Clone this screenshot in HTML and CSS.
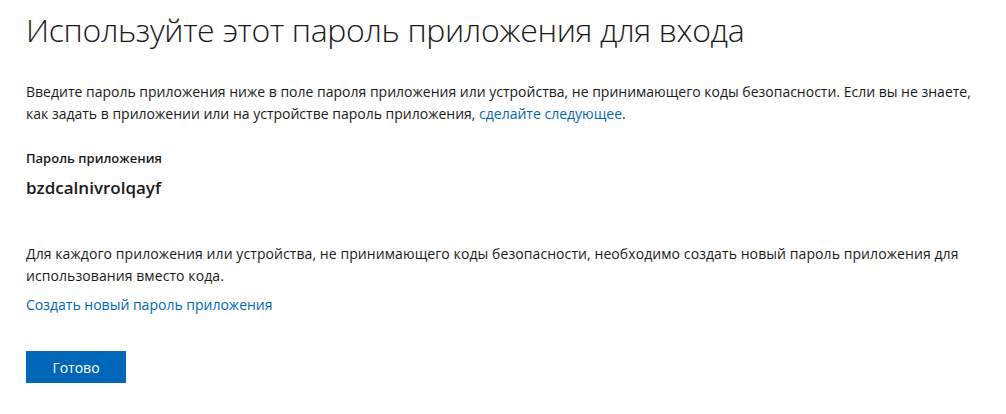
FILE: index.html
```html
<!DOCTYPE html>
<html lang="ru">
<head>
<meta charset="utf-8">
<link rel="stylesheet" href="styles.css">
</head>
<body>
<main class="page">
  <h1 class="title">Используйте этот пароль приложения для входа</h1>
  <p class="text intro">Введите пароль приложения ниже в поле пароля приложения или устройства, не принимающего коды безопасности. Если вы не знаете, как задать в приложении или на устройстве пароль приложения, <a class="link" href="#">сделайте следующее</a>.</p>
  <div class="label">Пароль приложения</div>
  <div class="password">bzdcalnivrolqayf</div>
  <p class="text note">Для каждого приложения или устройства, не принимающего коды безопасности, необходимо создать новый пароль приложения для использования вместо кода.</p>
  <a class="link create" href="#">Создать новый пароль приложения</a>
  <button class="btn" type="button">Готово</button>
</main>
</body>
</html>
```

FILE: styles.css
```css
html, body {
  margin: 0;
  padding: 0;
  background: #fff;
}
.page {
  display: flex;
  flex-direction: column;
  align-items: flex-start;
  padding: 8px 20px 0 26px;
  font-family: "Open Sans", "Noto Sans", sans-serif;
  color: #1a1a1a;
}
.title {
  margin: 0;
  font-size: 32px;
  font-weight: 300;
  line-height: 44px;
  color: #1a1a1a;
  letter-spacing: -0.35px;
}
.text {
  margin: 0;
  font-size: 14px;
  line-height: 22px;
}
.intro {
  margin-top: 29px;
}
.note {
  margin-top: 43px;
  letter-spacing: 0.08px;
}
.link {
  color: #0067b8;
  text-decoration: none;
}
.label {
  margin-top: 23px;
  font-size: 13px;
  font-weight: 600;
  line-height: 20px;
}
.password {
  margin-top: 8px;
  font-size: 17px;
  font-weight: 600;
  line-height: 24px;
}
.create {
  margin-top: 7px;
  font-size: 14px;
  line-height: 22px;
}
.btn {
  margin-top: 35px;
  width: 100px;
  height: 32px;
  border: none;
  background: #0067b8;
  color: #fff;
  font-family: "Open Sans", "Noto Sans", sans-serif;
  font-size: 14px;
  padding: 0;
}
```
